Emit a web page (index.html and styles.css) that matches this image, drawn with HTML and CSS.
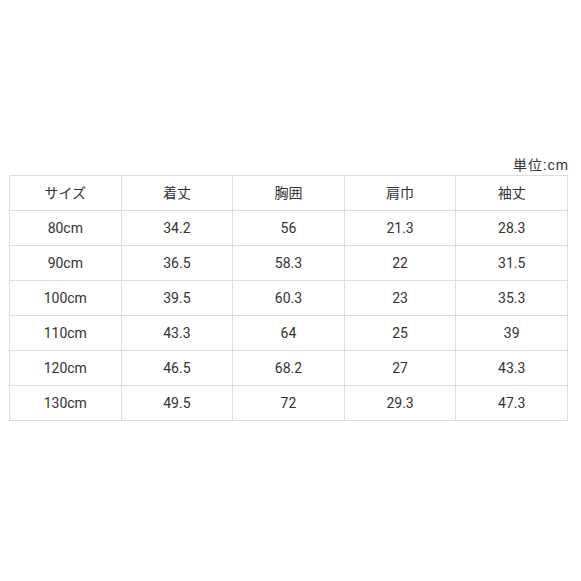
FILE: index.html
```html
<!DOCTYPE html>
<html lang="ja">
<head>
<meta charset="utf-8">
<link rel="stylesheet" href="styles.css">
</head>
<body>
<div class="wrap">
  <div class="unit">単位:cm</div>
  <table class="size-table">
    <tr><td>サイズ</td><td>着丈</td><td>胸囲</td><td>肩巾</td><td>袖丈</td></tr>
    <tr><td>80cm</td><td>34.2</td><td>56</td><td>21.3</td><td>28.3</td></tr>
    <tr><td>90cm</td><td>36.5</td><td>58.3</td><td>22</td><td>31.5</td></tr>
    <tr><td>100cm</td><td>39.5</td><td>60.3</td><td>23</td><td>35.3</td></tr>
    <tr><td>110cm</td><td>43.3</td><td>64</td><td>25</td><td>39</td></tr>
    <tr><td>120cm</td><td>46.5</td><td>68.2</td><td>27</td><td>43.3</td></tr>
    <tr><td>130cm</td><td>49.5</td><td>72</td><td>29.3</td><td>47.3</td></tr>
  </table>
</div>
</body>
</html>
```
FILE: styles.css
```css
html, body {
  margin: 0;
  padding: 0;
  background: #fff;
}
body {
  font-family: Roboto, "Noto Sans CJK JP", sans-serif;
  font-size: 14px;
  color: #333;
}
.wrap {
  padding: 155px 0 0 9px;
  width: 559px;
}
.unit {
  text-align: right;
  line-height: 20px;
  height: 20px;
  letter-spacing: 1px;
  margin-right: -1px;
}
.size-table {
  width: 559px;
  border-collapse: collapse;
  table-layout: fixed;
}
.size-table td {
  border: 1px solid #ddd;
  height: 34px;
  padding: 0;
  text-align: center;
  vertical-align: middle;
  line-height: 20px;
}
```
